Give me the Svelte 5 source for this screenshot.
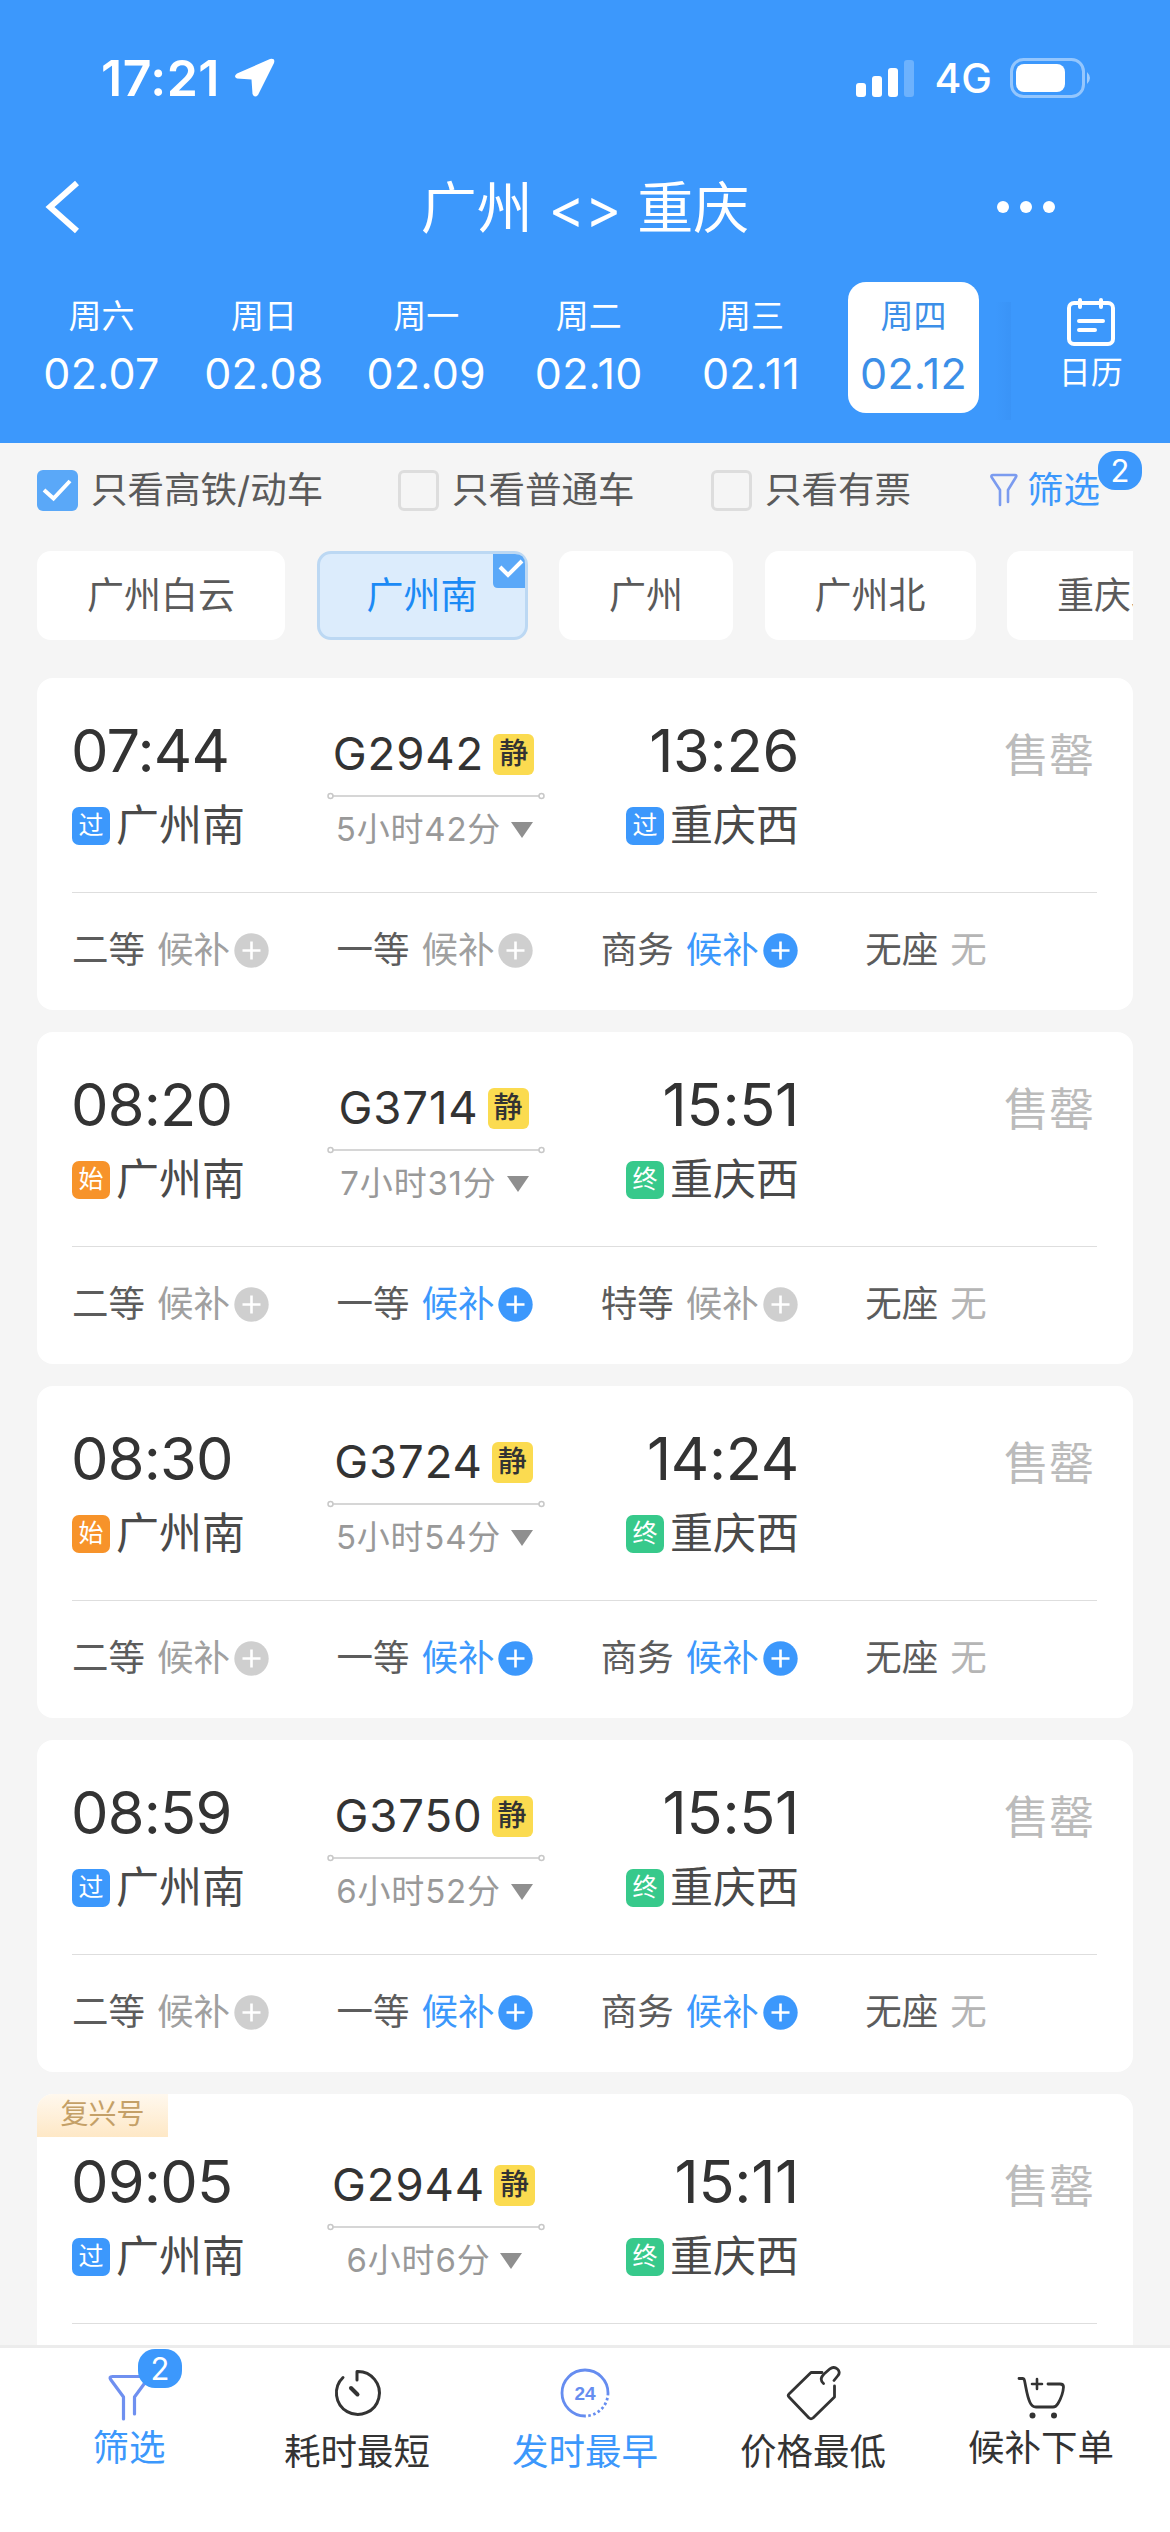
<script>
  const days = [
    { week: '周六', date: '02.07' },
    { week: '周日', date: '02.08' },
    { week: '周一', date: '02.09' },
    { week: '周二', date: '02.10' },
    { week: '周三', date: '02.11' },
    { week: '周四', date: '02.12' }
  ];

  let selectedDay = $state('02.12');

  let toggles = $state([
    { label: '只看高铁/动车', checked: true },
    { label: '只看普通车', checked: false },
    { label: '只看有票', checked: false }
  ]);

  const stations = ['广州白云', '广州南', '广州', '广州北', '重庆北'];
  let station = $state('广州南');

  const seat = (label, active = false) => ({ label, active });

  const trains = [
    {
      no: 'G2942', depart: '07:44', arrive: '13:26', duration: '5小时42分', from: '过', to: '过',
      seats: [seat('二等'), seat('一等'), seat('商务', true)]
    },
    {
      no: 'G3714', depart: '08:20', arrive: '15:51', duration: '7小时31分', from: '始', to: '终',
      seats: [seat('二等'), seat('一等', true), seat('特等')]
    },
    {
      no: 'G3724', depart: '08:30', arrive: '14:24', duration: '5小时54分', from: '始', to: '终',
      seats: [seat('二等'), seat('一等', true), seat('商务', true)]
    },
    {
      no: 'G3750', depart: '08:59', arrive: '15:51', duration: '6小时52分', from: '过', to: '终',
      seats: [seat('二等'), seat('一等', true), seat('商务', true)]
    },
    {
      no: 'G2944', depart: '09:05', arrive: '15:11', duration: '6小时6分', from: '过', to: '终',
      tag: '复兴号',
      seats: []
    }
  ];

  const kinds = { 过: 'pass', 始: 'start', 终: 'end' };
</script>

{#snippet stop(kind, name)}
  <div class="stop">
    <span class="stop-kind {kinds[kind]}">{kind}</span>
    <span class="stop-name">{name}</span>
  </div>
{/snippet}

<div class="screen">
  <header>
    <div class="status-bar">
      <div class="clock">
        <span>17:21</span>
        <svg width="42" height="40" viewBox="0 0 42 40">
          <path d="M36 1 L3 15.500 Q-1 18.500 3 20.500 L17.500 21.500 L18.500 36 Q20.500 40.500 24 37 L40 5 Q41.500 0 36 1Z" fill="#fff" />
        </svg>
      </div>
      <div class="signals">
        <svg width="58" height="37" viewBox="0 0 58 37" fill="#fff">
          <rect x="0" y="23" width="10" height="14" rx="3" />
          <rect x="16" y="16" width="10" height="21" rx="3" />
          <rect x="32" y="8" width="10" height="29" rx="3" />
          <rect x="48" y="0" width="10" height="37" rx="3" opacity="0.25" />
        </svg>
        <span class="network">4G</span>
        <svg width="83" height="40" viewBox="0 0 83 40">
          <rect x="1.500" y="1.500" width="72" height="37" rx="12" fill="none" stroke="#fff" stroke-opacity="0.45" stroke-width="3" />
          <rect x="6" y="6" width="49" height="28" rx="8" fill="#fff" />
          <path d="M77 14 Q83 20 77 26Z" fill="#fff" fill-opacity="0.5" />
        </svg>
      </div>
    </div>

    <div class="title-bar">
      <button class="back" aria-label="返回">
        <svg width="38" height="54" viewBox="0 0 38 54">
          <path d="M33 3 L6 27 L33 51" fill="none" stroke="#fff" stroke-width="6" />
        </svg>
      </button>
      <h1>广州 <span class="swap">&lt;&gt;</span> 重庆</h1>
      <button class="more" aria-label="更多">
        <i></i><i></i><i></i>
      </button>
    </div>

    <div class="dates">
      {#each days as day}
        <button class="day" class:selected={day.date === selectedDay} onclick={() => (selectedDay = day.date)}>
          <span class="week">{day.week}</span>
          <span class="date">{day.date}</span>
        </button>
      {/each}
      <span class="edge"></span>
      <button class="calendar">
        <svg width="50" height="50" viewBox="0 0 50 50" fill="none" stroke="#fff" stroke-width="4" stroke-linecap="round">
          <rect x="3" y="6" width="44" height="41" rx="5" />
          <path d="M14 3 V10 M35 3 V10 M13 24 H37 M13 33 H29" />
        </svg>
        <span>日历</span>
      </button>
    </div>
  </header>

  <div class="filters">
    {#each toggles as item}
      <button class="toggle" onclick={() => (item.checked = !item.checked)}>
        <span class="box" class:checked={item.checked}>
          {#if item.checked}
            <svg width="40" height="40" viewBox="0 0 40 40">
              <path d="M7 20 L16.500 28.500 L33 11" fill="none" stroke="#fff" stroke-width="4" />
            </svg>
          {/if}
        </span>
        {item.label}
      </button>
    {/each}
    <button class="filter-link">
      <svg width="29" height="34" viewBox="0 0 29 34" fill="none" stroke="#7b9bef" stroke-width="2.600" stroke-linecap="round" stroke-linejoin="round">
        <path d="M10 32 V17 L1.500 4 Q1 2 3 2 H25 Q27 2 26 4 L18 17 V29" />
      </svg>
      <span>筛选</span>
      <b class="count">2</b>
    </button>
  </div>

  <div class="stations">
    {#each stations as name}
      <button class="chip" class:active={name === station} onclick={() => (station = name)}>
        {name}
        {#if name === station}
          <svg class="corner" width="32" height="34" viewBox="0 0 32 34">
            <path d="M0 0 H22 Q32 0 32 10 V34 H5 Q0 34 0 29Z" fill="#5aa8f8" />
            <path d="M7 13 L15 21 L29 7" fill="none" stroke="#fff" stroke-width="4" />
          </svg>
        {/if}
      </button>
    {/each}
  </div>

  <main>
    {#each trains as train}
      <article class:tagged={train.tag}>
        {#if train.tag}
          <span class="tag">{train.tag}</span>
        {/if}
        <div class="summary">
          <div class="side">
            <div class="time">{train.depart}</div>
            {@render stop(train.from, '广州南')}
          </div>
          <div class="middle">
            <div class="number">{train.no}<span class="quiet">静</span></div>
            <svg class="track" width="218" height="8" viewBox="0 0 218 8" fill="none" stroke="#c8c8c8" stroke-width="1.500">
              <circle cx="3.500" cy="4" r="2.500" />
              <path d="M6 4 H212" />
              <circle cx="214.500" cy="4" r="2.500" />
            </svg>
            <div class="duration">
              {train.duration}
              <svg width="22" height="16" viewBox="0 0 22 16"><path d="M0 0 H22 L11 16Z" fill="#8f8f8f" /></svg>
            </div>
          </div>
          <div class="side right">
            <div class="time">{train.arrive}</div>
            {@render stop(train.to, '重庆西')}
          </div>
          <div class="sold-out">售罄</div>
        </div>
        {#if train.seats.length}
          <div class="seats">
            {#each train.seats as s}
              <div class="seat" class:active={s.active}>
                <span class="seat-name">{s.label}</span>
                <span class="wait">候补</span>
                <svg width="35" height="35" viewBox="0 0 35 35">
                  <circle cx="17.500" cy="17.500" r="17.200" fill="currentColor" />
                  <path d="M17.500 8.500 V26.500 M8.500 17.500 H26.500" stroke="#fff" stroke-width="2.600" />
                </svg>
              </div>
            {/each}
            <div class="seat">
              <span class="seat-name">无座</span>
              <span class="none">无</span>
            </div>
          </div>
        {/if}
      </article>
    {/each}
  </main>

  <nav>
    <button class="tab blue raised">
      <span class="icon">
        <svg width="48" height="56" viewBox="0 0 48 56" fill="none" stroke="#6f90f0" stroke-width="3.200" stroke-linecap="round" stroke-linejoin="round">
          <path d="M18.500 53 V31 L6 14 Q3.500 10.500 7.500 10.500 H40 Q44 10.500 42 14 L29.500 31 V48" />
        </svg>
        <b class="count">2</b>
      </span>
      <span>筛选</span>
    </button>
    <button class="tab">
      <span class="icon">
        <svg width="56" height="56" viewBox="0 0 56 56" fill="none" stroke="#333" stroke-width="3" stroke-linecap="round" stroke-linejoin="round">
          <path d="M28 14 V5.500 A21.500 21.500 0 1 1 14 11.500" />
          <path d="M22 22 L28.500 28.500" stroke-width="4" />
        </svg>
      </span>
      <span>耗时最短</span>
    </button>
    <button class="tab blue">
      <span class="icon">
        <svg width="56" height="56" viewBox="0 0 56 56">
          <g fill="none" stroke="#668df0" stroke-width="2.800">
            <path d="M28 50 A23 23 0 1 1 51 27" />
            <path d="M51 27 A23 23 0 0 1 28 50" stroke-dasharray="2.500 2.500" />
          </g>
          <text x="28" y="34" text-anchor="middle" fill="#668df0">24</text>
        </svg>
      </span>
      <span>发时最早</span>
    </button>
    <button class="tab">
      <span class="icon">
        <svg width="60" height="60" viewBox="0 0 60 60" fill="none" stroke="#333" stroke-width="2.800" stroke-linecap="round" stroke-linejoin="round">
          <path d="M39 6.500 H28 L6 28 Q4.500 29.500 6 31 L26 52 Q28 53.500 30 52 L51.500 31 V20" />
          <path d="M40.500 17.500 C36.500 14 38.500 10.500 41 8 L47 2.800 C52 -1 59 5 55 9.500 L51 14.500" />
        </svg>
      </span>
      <span>价格最低</span>
    </button>
    <button class="tab raised">
      <span class="icon">
        <svg width="56" height="56" viewBox="0 0 56 56" fill="none" stroke="#333" stroke-width="2.800" stroke-linecap="round" stroke-linejoin="round">
          <path d="M6 12.500 H9.500 Q11 12.500 11.500 14.500 C13.500 24 14 30 17 36.500 Q19 41 23 41 H40 Q43 41 45 37.500 Q50 29 50.500 21 Q50.500 18 47 18 H35" />
          <path d="M24 13 V23 M19 18 H29" stroke-width="2.600" />
          <g fill="#333" stroke="none"><circle cx="19.500" cy="49.500" r="3" /><circle cx="41" cy="49.500" r="3" /></g>
        </svg>
      </span>
      <span>候补下单</span>
    </button>
  </nav>
</div>

<style>
  :global(body) {
    background: #f5f5f5;
  }

  .screen {
    display: flex;
    flex-direction: column;
    width: 1170px;
    height: 2532px;
    overflow: hidden;
    box-sizing: border-box;
    background: #f5f5f5;
    color: #333;
    font-family: Inter, 'Noto Sans CJK SC', sans-serif;
    line-height: 1;
  }

  button {
    display: flex;
    align-items: center;
    padding: 0;
    border: 0;
    background: none;
    color: inherit;
    font: inherit;
    white-space: nowrap;
  }

  svg {
    display: block;
    flex: none;
  }

  header {
    flex: none;
    height: 443px;
    background: #3c98fc;
    color: #fff;
  }

  .status-bar {
    display: flex;
    justify-content: space-between;
    height: 156px;
    padding: 0 77px 0 101px;
  }

  .clock,
  .signals {
    display: flex;
    align-items: center;
    height: 156px;
  }

  .clock {
    gap: 14px;
    font-size: 50px;
    font-weight: 600;
    letter-spacing: 0.5px;
  }

  .network {
    margin: 0 18px 0 20px;
    font-size: 41px;
    font-weight: 500;
  }

  .title-bar {
    display: grid;
    grid-template-columns: 200px 1fr 200px;
    align-items: center;
    height: 102px;
  }

  .back {
    padding-left: 44px;
  }

  h1 {
    margin: 0;
    padding-top: 2px;
    text-align: center;
    font-size: 56px;
    font-weight: 400;
  }

  .swap {
    font-size: 55px;
  }

  .more {
    gap: 11px;
    padding-left: 27px;
  }

  .more i {
    width: 12px;
    height: 12px;
    border-radius: 50%;
    background: #fff;
  }

  .dates {
    display: flex;
    padding: 24px 0 0 36px;
    gap: 31.400px;
  }

  .day {
    flex-direction: column;
    width: 131px;
    height: 131px;
    border-radius: 18px;
  }

  .day.selected {
    background: #fff;
    color: #3c8fe8;
  }

  .week {
    margin-top: 18px;
    font-size: 33px;
  }

  .date {
    margin-top: 19px;
    font-size: 43px;
    letter-spacing: 0.2px;
  }

  .edge {
    width: 16px;
    height: 118px;
    margin: 20px -18px 0 -15px;
    background: linear-gradient(to right, transparent, rgba(0, 40, 120, 0.04));
  }

  .calendar {
    flex-direction: column;
    width: 70px;
    margin-left: 31px;
    padding-top: 15px;
    font-size: 32px;
    gap: 10px;
  }

  .filters {
    display: flex;
    flex: none;
    align-items: center;
    height: 94px;
    padding: 0 37px;
    color: #5a5a5a;
    font-size: 36.500px;
  }

  .toggle {
    gap: 13px;
    width: 361px;
  }

  .toggle:nth-child(2) {
    width: 313px;
  }

  .toggle:nth-child(3) {
    width: 279px;
  }

  .box {
    box-sizing: border-box;
    width: 41px;
    height: 41px;
    border: 3px solid #ddd;
    border-radius: 6px;
  }

  .box.checked {
    border: 0;
    background: #5aa8f8;
  }

  .filter-link {
    position: relative;
    gap: 8px;
    color: #3c98fc;
  }

  .count {
    position: absolute;
    display: flex;
    align-items: center;
    justify-content: center;
    width: 44px;
    height: 39px;
    border-radius: 17px;
    background: #3c98fc;
    color: #fff;
    font-size: 31px;
    font-weight: 400;
  }

  .filter-link .count {
    top: -21px;
    right: -42px;
  }

  .stations {
    display: flex;
    flex: none;
    gap: 31.500px;
    width: 1096px;
    margin: 14px 0 0 37px;
    overflow: hidden;
  }

  .chip {
    position: relative;
    flex: none;
    box-sizing: border-box;
    height: 89px;
    padding: 0 50px;
    border-radius: 14px;
    background: #fff;
    color: #5a5a5a;
    font-size: 37px;
  }

  .chip.active {
    border: 3px solid #bcd8f3;
    padding: 0 47px;
    background: #dcecfc;
    color: #1b8af5;
  }

  .corner {
    position: absolute;
    top: 0;
    right: 0;
  }

  main {
    display: flex;
    flex: 1;
    flex-direction: column;
    gap: 22px;
    min-height: 0;
    padding: 38px 37px 0;
    overflow: hidden;
  }

  article {
    position: relative;
    flex: none;
    box-sizing: border-box;
    height: 332px;
    padding: 41px 36px 0 35px;
    border-radius: 16px;
    background: #fff;
    overflow: hidden;
  }

  article.tagged {
    padding-top: 56px;
  }

  .tag {
    position: absolute;
    top: 0;
    left: 0;
    width: 131px;
    height: 43px;
    line-height: 41px;
    background: linear-gradient(#fff8ee, #fee8c6);
    color: #c4a067;
    font-size: 28px;
    text-align: center;
  }

  .summary {
    display: flex;
    height: 173px;
    border-bottom: 1px solid #dedede;
  }

  .side {
    width: 176px;
  }

  .time {
    height: 64px;
    margin-left: -1px;
    line-height: 63px;
    font-size: 59.500px;
    font-weight: 400;
    letter-spacing: -0.8px;
  }

  .stop {
    display: flex;
    align-items: center;
    gap: 6px;
    margin-top: 21px;
  }

  .stop-kind {
    width: 38px;
    height: 38px;
    border-radius: 7px;
    color: #fff;
    font-size: 25px;
    line-height: 37px;
    text-align: center;
  }

  .pass {
    background: #3c98fc;
  }

  .start {
    background: #f7932a;
  }

  .end {
    background: #37c98b;
  }

  .stop-name {
    color: #4a4a4a;
    font-size: 43px;
    white-space: nowrap;
  }

  .middle {
    display: flex;
    flex-direction: column;
    align-items: center;
    width: 218px;
    margin-left: 79px;
  }

  .number {
    display: flex;
    align-items: center;
    height: 70px;
    margin-left: -5px;
    font-size: 45.500px;
    font-weight: 400;
    letter-spacing: 0.9px;
  }

  .quiet {
    width: 41px;
    height: 41px;
    margin-left: 9px;
    border-radius: 6px;
    background: #fbdb50;
    font-size: 29px;
    font-weight: 500;
    letter-spacing: 0;
    line-height: 40px;
    text-align: center;
  }

  .track {
    margin-top: 3px;
  }

  .duration {
    display: flex;
    align-items: center;
    gap: 10px;
    margin: 13px 0 0 -3px;
    color: #999;
    font-size: 33px;
    letter-spacing: 0.8px;
    white-space: nowrap;
  }

  .side.right {
    display: flex;
    flex-direction: column;
    align-items: flex-end;
    margin-left: 78px;
  }

  .right .time {
    letter-spacing: -0.3px;
  }

  .sold-out {
    margin: 14px 3px 0 auto;
    color: #bbb;
    font-size: 45px;
  }

  .seats {
    display: grid;
    grid-template-columns: repeat(4, 264.400px);
    height: 115px;
    font-size: 36.500px;
  }

  .seat {
    display: flex;
    align-items: center;
    color: #cfcfcf;
  }

  .seat.active {
    color: #3c98fc;
  }

  .seat-name {
    margin-right: 12px;
    color: #5c5c5c;
  }

  .wait {
    margin-right: 4px;
    color: #a0a0a0;
  }

  .active .wait {
    color: #3c98fc;
  }

  .none {
    color: #b5b5b5;
  }

  nav {
    display: grid;
    flex: none;
    grid-template-columns: repeat(5, 1fr);
    box-sizing: border-box;
    height: 187px;
    padding: 0 15px;
    border-top: 3px solid #ececec;
    background: #fff;
  }

  .tab {
    flex-direction: column;
    padding-top: 18px;
    color: #333;
    font-size: 36.500px;
  }

  .blue {
    color: #3c98fc;
  }

  .icon {
    position: relative;
    display: flex;
    justify-content: center;
    height: 68px;
  }

  .raised .icon {
    height: 64px;
  }

  .icon .count {
    top: -17px;
    left: 33px;
  }

  text {
    font-family: 'Liberation Sans', sans-serif;
    font-size: 19px;
    font-weight: 700;
  }
</style>
